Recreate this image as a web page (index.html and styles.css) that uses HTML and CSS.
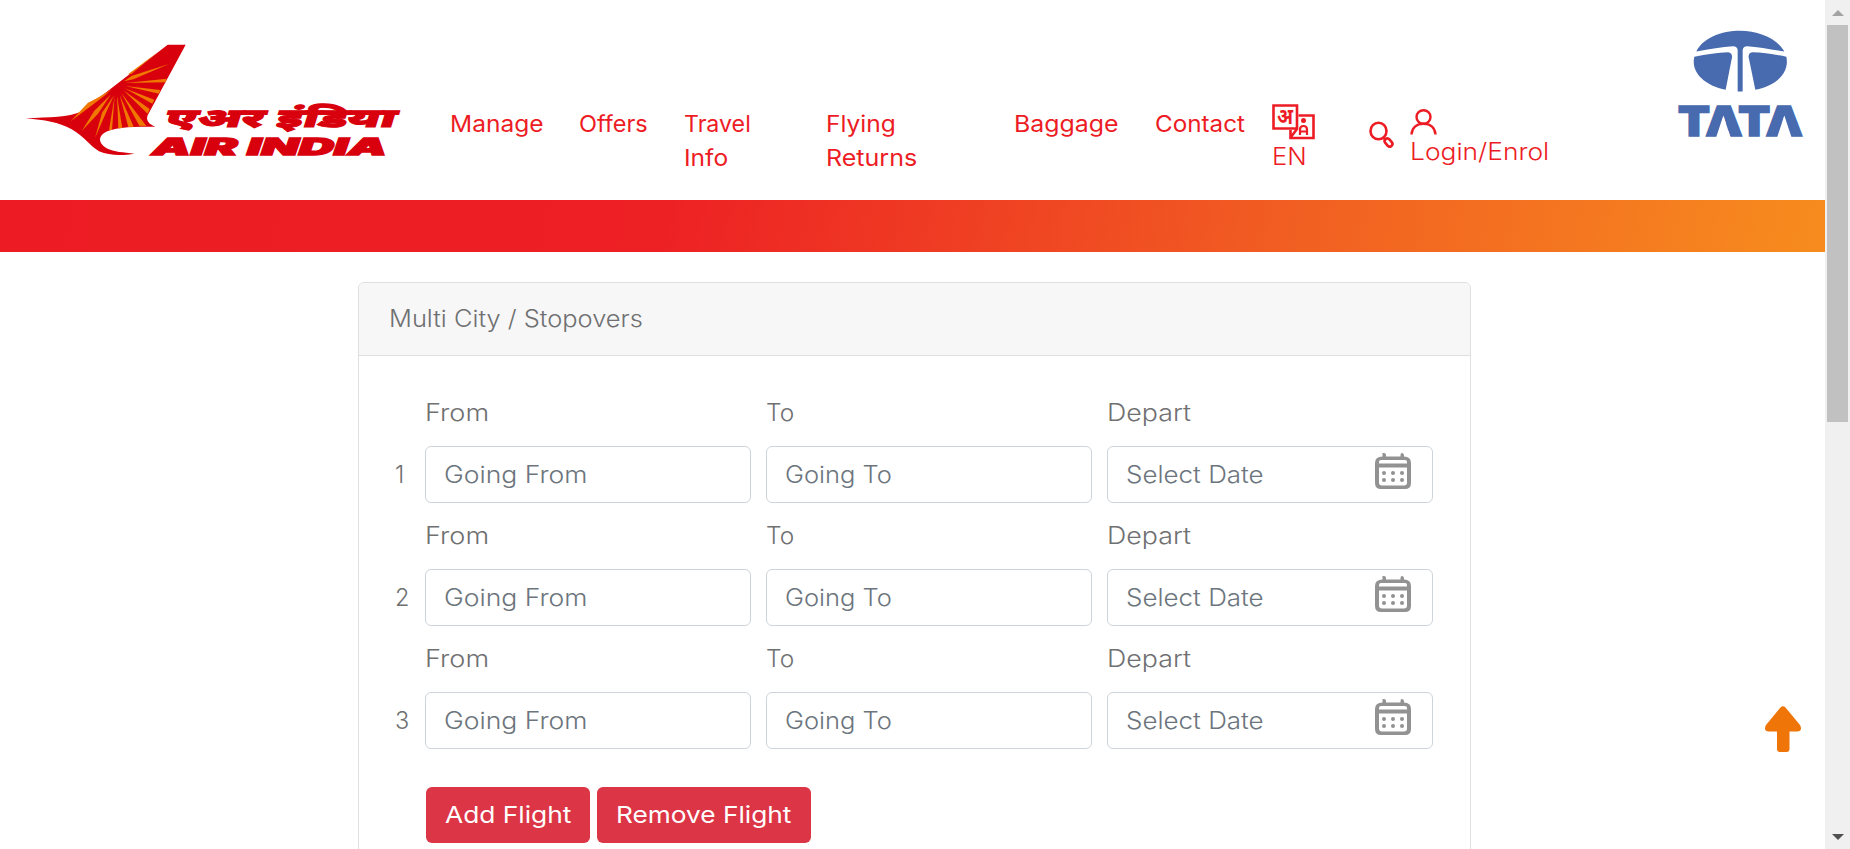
FILE: index.html
```html
<!DOCTYPE html>
<html lang="en">
<head>
<meta charset="utf-8">
<title>Air India - Multi City</title>
<link rel="stylesheet" href="styles.css">
</head>
<body>
<div class="page">
  <main class="content">
    <header class="header">
      <svg class="logo" viewBox="0 0 1260 480" role="img" aria-label="Air India">
        <path fill="#d9000d" d="M77 295C150 291 205 292 243 275L503 74H557L443 286C437 302 447 313 466 320C410 320 350 320 322 334C292 347 294 369 320 385C342 397 370 397 404 401C370 406 330 408 297 394C270 378 255 352 215 328C175 306 135 300 77 295Z"/>
        <g fill="#f07800">
          <path d="M475 95L384 163L394 162Z"/>
          <path d="M507 132L396 167L372 184L400 178Z"/>
          <path d="M500 176L376 189L497 187Z"/>
          <path d="M481 210L376 198L477 221Z"/>
          <path d="M463 239L374 205L457 251Z"/>
          <path d="M449 267L370 211L443 281Z"/>
          <path d="M439 318L364 219L418 317Z"/>
          <path d="M401 320L359 225L385 321Z"/>
          <path d="M367 324L351 227L355 325Z"/>
          <path d="M336 329L344 227L327 331Z"/>
          <path d="M285 354L316 283L342 226L306 278Z"/>
          <path d="M245 333L294 281L333 223L283 272Z"/>
          <path d="M212 304L272 259L327 217L264 248Z"/>
          <path d="M236 284L290 244L336 207L286 238Z"/>
        </g>
        <text class="logo-hindi" x="494" y="322" textLength="690" lengthAdjust="spacingAndGlyphs" transform="translate(96 0) skewX(-17)">एअर इंडिया</text>
        <text class="logo-latin" x="456" y="406" textLength="704" lengthAdjust="spacingAndGlyphs">AIR INDIA</text>
      </svg>
      <nav class="nav">
        <a><span class="w-manage">Manage</span></a>
        <a><span class="w-offers">Offers</span></a>
        <a><span class="w-travel">Travel</span><br><span class="w-info">Info</span></a>
        <a><span class="w-flying">Flying</span><br><span class="w-returns">Returns</span></a>
        <a><span class="w-baggage">Baggage</span></a>
        <a><span class="w-contact">Contact</span></a>
      </nav>
      <div class="lang">
        <svg class="lang-icon" viewBox="0 0 44 36"><g fill="none" stroke="#ed1c24" stroke-width="2.6"><path d="M1.500 1.500H25V24.500H1.500Z"/><path d="M26.500 11.500H41.500V34H18.500V26M18.500 33.500L25 25"/></g><text class="lang-hi" x="5" y="19.500" textLength="16" lengthAdjust="spacingAndGlyphs">अ</text><circle cx="31.500" cy="16.500" r="2.500" fill="#ed1c24"/><path d="M28 31V25.500Q28 22 31.500 22T35 25.500V31M28 27.500H35" fill="none" stroke="#ed1c24" stroke-width="2.200"/></svg>
        <span class="w-en">EN</span>
      </div>
      <svg class="search" viewBox="0 0 26 28"><g fill="none" stroke="#ed1c24" stroke-width="2.600"><ellipse cx="9.500" cy="10" rx="8" ry="8.200"/><path d="M14.500 16.500L17 19.500"/><rect x="-2.700" y="-4.500" width="5.400" height="9" rx="2.700" transform="translate(19.500 21.500) rotate(-40)"/></g></svg>
      <div class="login">
        <svg width="27" height="26" viewBox="0 0 27 26"><g fill="none" stroke="#ed1c24" stroke-width="2.400"><ellipse cx="13.500" cy="8" rx="7" ry="6.800"/><path d="M1.500 25.500C2 18.500 7 14.800 13.500 14.800S25 18.500 25.500 25.500"/></g></svg>
        <span class="w-login">Login/Enrol</span>
      </div>
      <svg class="tata" viewBox="0 0 375 320" role="img" aria-label="Tata">
        <g fill="#486aae">
          <path d="M55 64C75 24 130 2 186 2S298 26 319 64C280 57 240 51 208 48Q195 48 194 60V184H179V60Q178 48 165 48C132 50 95 56 55 64Z"/>
          <path d="M49 80C85 72 120 67 150 66Q163 67 162 81L143 179C85 168 37 130 49 80Z"/>
          <path d="M325 80C290 72 255 67 223 66Q211 67 212 81L232 179C290 168 336 130 325 80Z"/>
        </g>
        <text class="tata-text" x="0" y="319" textLength="374" lengthAdjust="spacingAndGlyphs">TATA</text>
        <path fill="#fff" d="M114 323L136 256L158 323ZM297 323L319 256L341 323Z"/>
      </svg>
    </header>
    <div class="band"></div>
    <section class="card">
      <h1 class="card-head"><span class="w-title">Multi City / Stopovers</span></h1>
      <div class="card-body">
        <div class="leg">
          <span class="num">1</span>
          <label class="field"><span class="w-from">From</span><span class="input"><span class="w-gfrom">Going From</span></span></label>
          <label class="field"><span class="w-to">To</span><span class="input"><span class="w-gto">Going To</span></span></label>
          <label class="field"><span class="w-depart">Depart</span><span class="input"><span class="w-date">Select Date</span><svg class="cal" viewBox="0 0 36 36"><use href="#cal"/></svg></span></label>
        </div>
        <div class="leg">
          <span class="num">2</span>
          <label class="field"><span class="w-from">From</span><span class="input"><span class="w-gfrom">Going From</span></span></label>
          <label class="field"><span class="w-to">To</span><span class="input"><span class="w-gto">Going To</span></span></label>
          <label class="field"><span class="w-depart">Depart</span><span class="input"><span class="w-date">Select Date</span><svg class="cal" viewBox="0 0 36 36"><use href="#cal"/></svg></span></label>
        </div>
        <div class="leg">
          <span class="num">3</span>
          <label class="field"><span class="w-from">From</span><span class="input"><span class="w-gfrom">Going From</span></span></label>
          <label class="field"><span class="w-to">To</span><span class="input"><span class="w-gto">Going To</span></span></label>
          <label class="field"><span class="w-depart">Depart</span><span class="input"><span class="w-date">Select Date</span><svg class="cal" viewBox="0 0 36 36"><use href="#cal"/></svg></span></label>
        </div>
        <div class="actions">
          <button class="btn btn-add"><span class="w-add">Add Flight</span></button>
          <button class="btn btn-remove"><span class="w-remove">Remove Flight</span></button>
        </div>
      </div>
    </section>
    <svg class="to-top" viewBox="0 0 36 46"><path fill="#ef7509" d="M15.500 1.500Q18 -1 20.500 1.500L35 19Q38 25 32 25.500H24.500V43Q24.500 46 21.500 46H15Q12 46 12 43V25.500H4Q-2 25 1 19Z"/></svg>
  </main>
  <div class="scrollbar">
    <svg class="arrow" viewBox="0 0 12 6"><path fill="#a3a3a3" d="M0 6L6 0L12 6Z"/></svg>
    <div class="thumb"></div>
    <svg class="arrow" viewBox="0 0 12 6"><path fill="#505050" d="M0 0L6 6L12 0Z"/></svg>
  </div>
</div>
<svg width="0" height="0"><defs>
  <g id="cal"><path fill="#929292" d="M7.500 0H9Q11 0 11 2V3.500H25.500V2Q25.500 0 27 0T29 2V3.500Q36 3.500 36 10V30Q36 36 30 36H6Q0 36 0 30V10Q0 3.500 7.500 3.500ZM4 10.500H32V9Q32 7 30 7H6Q4 7 4 9ZM4 14.500V29.500Q4 32.500 7 32.500H29Q32 32.500 32 29.500V14.500Z" fill-rule="evenodd"/><g fill="#929292"><circle cx="9" cy="20" r="2"/><circle cx="18" cy="20" r="2"/><circle cx="27" cy="20" r="2"/><circle cx="9" cy="27" r="2"/><circle cx="18" cy="27" r="2"/><circle cx="27" cy="27" r="2"/></g></g>
</defs></svg>
</body>
</html>
```
FILE: styles.css
```css
* { box-sizing: border-box; }
body {
  margin: 0;
  height: 849px;
  overflow: hidden;
  background: #fff;
  color: #6f7072;
  font-family: Inter, "Noto Sans", sans-serif;
  font-size: 23.5px;
  font-weight: 300;
  line-height: 36px;
}
.page { display: flex; height: 849px; overflow: hidden; }
.content { position: relative; width: 1825px; }
.header { display: flex; align-items: flex-start; height: 200px; color: #ed1c24; }
.logo { flex: none; width: 420px; height: 160px; margin-top: 20px; overflow: visible; }
.logo text { fill: #d9000d; }
.logo-hindi { font-family: "Noto Sans", sans-serif; font-size: 78px; font-weight: 900; stroke: #d9000d; stroke-width: 3; }
.logo-latin { font-family: Inter, sans-serif; font-size: 67px; font-weight: 900; font-style: italic; stroke: #d9000d; stroke-width: 4; }
.nav {
  display: grid;
  flex: none;
  grid-template-columns: 129px 105px 142px 188px 141px 118px;
  margin: 107px 0 0 30px;
  font-size: 22.5px;
  font-weight: 400;
  line-height: 34px;
}
.lang { display: flex; flex: none; flex-direction: column; width: 97px; margin: 104px 0 0 -1px; }
.lang span { margin-top: -1px; }
.lang-icon { width: 44px; height: 36px; overflow: visible; }
.lang-hi { font-family: "Noto Sans", sans-serif; font-size: 22px; font-weight: 700; fill: #ed1c24; }
.search { flex: none; width: 26px; height: 28px; margin-top: 121px; }
.login { display: flex; flex: none; flex-direction: column; width: 150px; margin: 109px 0 0 15px; }
.login span { margin-top: -1px; }
.tata { flex: none; width: 125px; height: 107px; margin: 30px 0 0 118px; overflow: visible; }
.tata-text { font-family: Inter, sans-serif; font-size: 122px; font-weight: 900; fill: #486aae; stroke: #486aae; stroke-width: 5; }
.band { height: 52px; background: linear-gradient(100deg, #ed1c24 0%, #ed2024 36%, #f15a22 68%, #f78c1e 100%); }
.card {
  width: 1113px;
  height: 640px;
  margin: 30px 0 0 358px;
  border: 1px solid #dfdfdf;
  border-radius: 6px;
}
.card-head {
  height: 73px;
  margin: 0;
  padding: 18px 30px;
  border-bottom: 1px solid #dfdfdf;
  border-radius: 5px 5px 0 0;
  background: #f7f7f7;
  font-size: inherit;
  font-weight: inherit;
}
.card-body { padding: 39px 37px 0 36px; }
.leg {
  display: grid;
  grid-template-columns: 15px 326px 326px 326px;
  column-gap: 15px;
  align-items: end;
  height: 108px;
  margin-bottom: 15px;
}
.num { line-height: 57px; }
.field { display: flex; flex-direction: column; gap: 15px; }
.input {
  position: relative;
  display: flex;
  height: 57px;
  padding: 10px 18px;
  border: 1px solid #ced4da;
  border-radius: 6px;
  color: #6c757d;
}
.cal { position: absolute; top: 6px; right: 21px; width: 36px; height: 36px; }
.actions { display: flex; gap: 7px; padding: 23px 0 0 31px; }
.btn {
  height: 56px;
  padding: 0 19px;
  border: 0;
  border-radius: 6px;
  background: #dc3545;
  color: #fff;
  font: inherit;
  font-weight: 400;
  text-align: left;
  white-space: nowrap;
}
.btn-add { width: 164px; }
.btn-remove { width: 214px; }

/* Wide-set lettering */
[class^="w-"] { display: inline-block; align-self: flex-start; transform-origin: 0 50%; white-space: nowrap; }
.w-manage { transform: scaleX(1.09); }
.w-offers { transform: scaleX(1.045); }
.w-travel { transform: scaleX(1.03); }
.w-info { transform: scaleX(1.09); }
.w-flying { transform: scaleX(1.09); }
.w-returns { transform: scaleX(1.113); }
.w-baggage { transform: scaleX(1.105); }
.w-contact { transform: scaleX(1.077); }
.w-en { transform: scaleX(1.09); }
.w-login { transform: scaleX(1.122); }
.w-title { transform: scaleX(1.082); }
.w-from { transform: scaleX(1.155); }
.w-to { transform: scaleX(1.04); }
.w-depart { transform: scaleX(1.14); }
.w-gfrom { transform: scaleX(1.13); }
.w-gto { transform: scaleX(1.085); }
.w-date { transform: scaleX(1.105); }
.w-add { transform: scaleX(1.12); }
.w-remove { transform: scaleX(1.117); }

.to-top { position: absolute; left: 1765px; top: 706px; width: 36px; height: 46px; }
.scrollbar {
  display: flex;
  flex-direction: column;
  align-items: center;
  width: 25px;
  padding: 10px 0 9px;
  background: #f0f0f0;
}
.arrow { width: 12px; height: 6px; }
.thumb { width: 21px; height: 397px; margin: 9px 0 auto; background: #c1c1c1; }
```
